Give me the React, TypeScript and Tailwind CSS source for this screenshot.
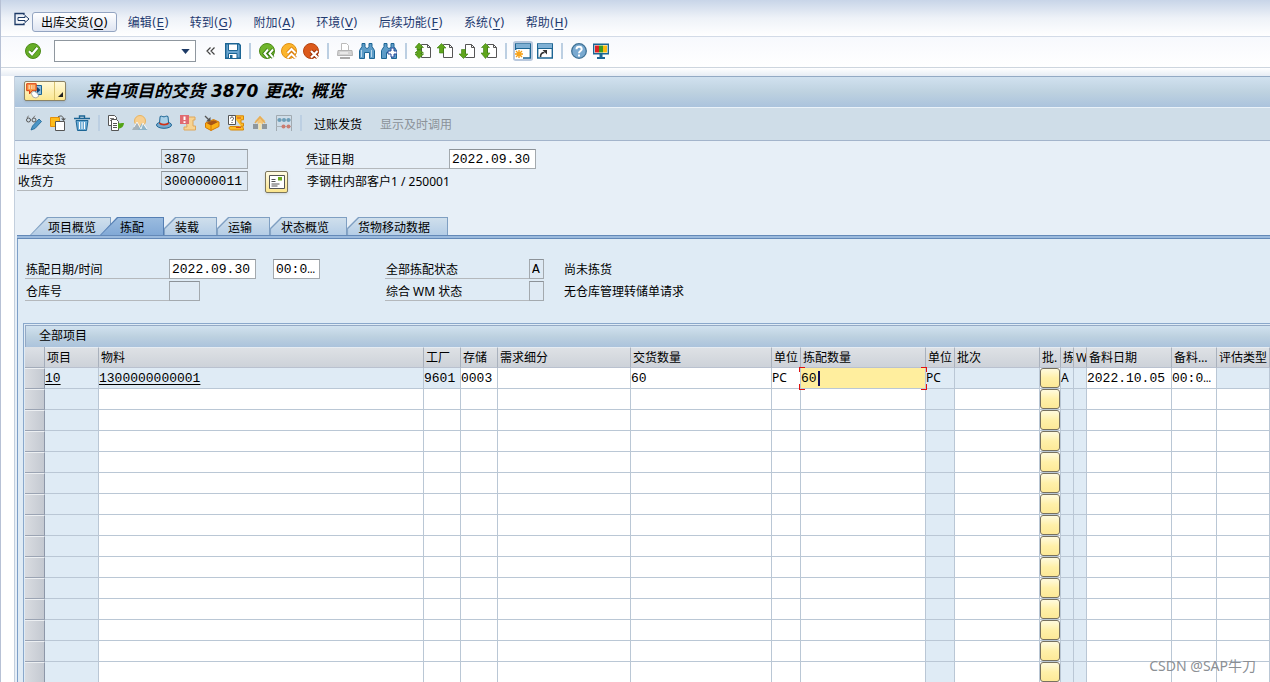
import type { ReactNode } from "react"
import clsx from "clsx"

type IconProps = { children: ReactNode }

function Icon({ children }: IconProps) {
  return (
    <svg viewBox="0 0 16 16" className="h-4 w-4 shrink-0" fill="none" aria-hidden="true">
      {children}
    </svg>
  )
}

const blue = "#1c6594"
const green = "#5fa51c"

function PageOutline() {
  return <path d="M6.5 1.5h6l3 3v10h-9z M12.5 1.5v3h3" fill="#fff" stroke="#555" />
}

function WindowFrame() {
  return (
    <>
      <path d="M.7 1h14.6v14H.7z" fill="#fff" stroke={blue} strokeWidth="1.4" />
      <path d="M1 1h14v4H1z" fill="#7fb0d4" />
      <path d="M0 5.5h16" stroke={blue} />
    </>
  )
}

function Binoculars() {
  return (
    <path
      d="M3 .5h3v3l1.5 2h1L10 3.5v-3h3v3l2.5 4v8h-5v-6h-5v6h-5v-8L3 3.500z"
      fill="#5d9cc8"
      stroke={blue}
    />
  )
}

type Tool = { label: string; icon: ReactNode; active?: boolean } | "sep"

const systemTools: Tool[] = [
  {
    label: "保存",
    icon: (
      <>
        <path d="M.7.7h13l1.6 1.6v13H.7z" fill="#6aa5d0" stroke={blue} strokeWidth="1.4" />
        <path d="M3.5 1h9v6.5h-9z" fill="#fff" stroke={blue} />
        <path d="M3.5 10.5h8.5v5H3.5z" fill="#fff" stroke={blue} />
        <path d="M5 12h2.5v3H5z" fill={blue} />
      </>
    ),
  },
  "sep",
  {
    label: "返回",
    icon: (
      <>
        <circle cx="8" cy="8" r="7.5" fill="#6fb52c" stroke="#4c8b18" />
        <path d="M9 6.5 5.5 10.5 9 14.5M14 6.5l-3.5 4L14 14.5" stroke="#35780e" strokeWidth="3.6" />
        <path d="M9 6.5 5.5 10.5 9 14.5M14 6.5l-3.5 4L14 14.5" stroke="#fff" strokeWidth="2" />
      </>
    ),
  },
  {
    label: "退出",
    icon: (
      <>
        <circle cx="8" cy="8" r="7.5" fill="#fbb52d" stroke="#e09012" />
        <path d="m6.5 10 4-4 4 4m-8 5 4-4 4 4" stroke="#d87908" strokeWidth="3.6" />
        <path d="m6.5 10 4-4 4 4m-8 5 4-4 4 4" stroke="#fff" strokeWidth="2" />
      </>
    ),
  },
  {
    label: "取消",
    icon: (
      <>
        <circle cx="8" cy="8" r="7.5" fill="#dc5a1b" stroke="#b54410" />
        <path d="m8 8 6.5 6.5M14.5 8 8 14.5" stroke="#9c2f08" strokeWidth="4" />
        <path d="m8 8 6.5 6.5M14.5 8 8 14.5" stroke="#fff" strokeWidth="2.2" />
      </>
    ),
  },
  "sep",
  {
    label: "打印",
    icon: (
      <>
        <path d="M4.500 7V.5h5l2 2V7" fill="#fff" stroke="#bbb" />
        <path d="M1 7.500h14l.5 5H.5z" fill="#d3d3d3" stroke="#b3b3b3" />
        <path d="M3 15h10" stroke="#aaa" strokeWidth="2" />
        <path d="M3 10h8" stroke="#fff" />
      </>
    ),
  },
  {
    label: "查找",
    icon: (
      <>
        <Binoculars />
        <path d="M2.500 7v7M12.500 7v7" stroke="#b9d8ec" />
      </>
    ),
  },
  {
    label: "继续查找",
    icon: (
      <>
        <Binoculars />
        <path d="M10 5h3v3h3v3h-3v3h-3v-3H7V8h3z" fill="#fff" stroke="#27499b" />
      </>
    ),
  },
  "sep",
  {
    label: "首页",
    icon: (
      <>
        <PageOutline />
        <path d="M4 0 8.500 4.500H6v2.500H2V4.500H0zM4 6l4.500 4H6v1h2.500L4 15.500 0 11h2v-1H0z" fill={green} stroke="#3b7d0d" strokeWidth=".6" />
      </>
    ),
  },
  {
    label: "上一页",
    icon: (
      <>
        <PageOutline />
        <path d="M4.500.5 9 5H6.500v5h-4V5H0z" fill={green} stroke="#3b7d0d" strokeWidth=".6" />
      </>
    ),
  },
  {
    label: "下一页",
    icon: (
      <>
        <PageOutline />
        <path d="M4.500 15.500 9 11H6.500V6.500h-4V11H0z" fill={green} stroke="#3b7d0d" strokeWidth=".6" />
      </>
    ),
  },
  {
    label: "末页",
    icon: (
      <>
        <PageOutline />
        <path d="M4.500.5 8.500 4.500h-2V10h2.500l-4.500 5.500L0 10h2.500V4.500H.5z" fill={green} stroke="#3b7d0d" strokeWidth=".6" />
      </>
    ),
  },
  "sep",
  {
    label: "创建新会话",
    active: true,
    icon: (
      <>
        <WindowFrame />
        <path d="M0 7h8v9H0z" fill="#fff" />
        <path d="M4 7v8M0 11h8M1 8l6 6M7 8l-6 6" stroke="#f59c12" strokeWidth="1.300" />
        <circle cx="4" cy="11" r="2.300" fill="#f9a51a" />
      </>
    ),
  },
  {
    label: "生成快捷方式",
    icon: (
      <>
        <WindowFrame />
        <path d="M3.500 14c0-3 1-4.500 4-4.500" stroke="#333" strokeWidth="1.600" />
        <path d="M5.500 7H10v4.500z" fill="#333" />
      </>
    ),
  },
  "sep",
  {
    label: "帮助",
    icon: (
      <>
        <circle cx="8" cy="8" r="7.300" fill="#79a9d0" stroke="#3f7296" strokeWidth="1.300" />
        <path d="M5.500 6.200c0-3.200 5.200-3.200 5.200 0C10.700 8 8 8 8 10.200" stroke="#fff" strokeWidth="2" />
        <path d="M7 11.500h2v2H7z" fill="#fff" />
      </>
    ),
  },
  {
    label: "定制本地布局",
    icon: (
      <>
        <path d="M.7 1.200h14.600v9.600H.7z" fill="#fff" stroke={blue} strokeWidth="1.400" />
        <path d="M2 2.500h4v7H2z" fill="#d22" />
        <path d="M6 2.500h4v7H6z" fill="#3b9b22" />
        <path d="M10 2.500h4v7h-4z" fill="#fbb80f" />
        <path d="M6.500 11h3v3h2.500v2H4v-2h2.500z" fill={blue} />
      </>
    ),
  },
]

const appTools: Tool[] = [
  {
    label: "显示/更改",
    icon: (
      <>
        <circle cx="2.500" cy="5" r="2" stroke="#555" />
        <circle cx="8" cy="5" r="2" stroke="#555" />
        <path d="M1 3 2.500.7M7 3l2-2.300" stroke="#777" />
        <path d="m5 15 1.500-4L13 4l2.500 2.500L9 13.500z" fill="#4b95c6" stroke={blue} strokeWidth=".8" />
      </>
    ),
  },
  {
    label: "其他交货",
    icon: (
      <>
        <path d="M.5 2.500h9v9h-9z" fill="#fdbc1c" stroke="#e79008" />
        <path d="M5.500 6.500h9v9h-9z" fill="#fff" stroke="#555" />
        <path d="M8 2c3-2 5-1 5.500 2" stroke="#555" />
        <path d="M11 3.500h5L13.500 6z" fill="#555" />
      </>
    ),
  },
  {
    label: "删除",
    icon: (
      <>
        <path d="M0 3.500h16M5.500 3V1h5v2" stroke={blue} strokeWidth="1.400" />
        <path d="M2 5.500h12l-1.500 10h-9z" fill="#6aa9d3" stroke={blue} />
        <path d="M5.500 7v7M8 7v7M10.500 7v7" stroke="#fff" />
      </>
    ),
  },
  "sep",
  {
    label: "发布",
    icon: (
      <>
        <path d="M.5.5h6l2 2v8h-8z" fill="#fff" stroke="#555" />
        <path d="M2 3.500h4M2 5.500h5" stroke="#777" />
        <path d="M3.500 4.500h5l2 2v9h-7z" fill="#fff" stroke="#555" />
        <path d="M5 8.500h4M5 10.500h4M5 12.500h4" stroke="#555" />
        <path d="M10 8c2 1 3-.5 6 0-.5 4-2.500 5.500-6 5.500z" fill="#52a316" />
      </>
    ),
  },
  {
    label: "批次确定",
    icon: (
      <>
        <circle cx="8" cy="6" r="5.500" fill="#f7cf91" stroke="#e9b45f" />
        <path d="m0 15 5-8 4 8z" fill="#a7b3ba" />
        <path d="m6 15 4-7 5.500 7z" fill="#8eb5ca" />
        <path d="m2 12 3-5 4 7 2-6 4 6" stroke="#fff" strokeWidth=".8" />
      </>
    ),
  },
  {
    label: "抬头详细信息",
    icon: (
      <>
        <ellipse cx="8" cy="10" rx="7.500" ry="3.300" fill="#77abd0" stroke={blue} />
        <path d="m3.500 8 .6-6.500c2-1 2 .5 4 .3 1.800-.2 2-1.300 3.900-.3l.6 6.500c-2 2-7 2-9.100 0z" fill="#a9d0e8" stroke={blue} />
        <path d="M3.500 8.200c2 2 7 2 9 0" stroke="#d33015" strokeWidth="1.800" />
      </>
    ),
  },
  {
    label: "不完整日志",
    icon: (
      <>
        <path d="M6 2h9v3h-2v6h2.500v4H4v-3h3z" fill="#f7d391" stroke="#dfa75a" />
        <path d="M0 0h9v9H0z" fill="#e06a70" />
        <path d="M3.500 1.500h2V5h-2zM3.500 6.200h2V8h-2z" fill="#fff" />
      </>
    ),
  },
  {
    label: "包装",
    icon: (
      <>
        <path d="m1.500 8 8-3.500 5.500 2.500v4.500L7 15.500l-5.500-3z" fill="#fbb118" stroke="#d57a05" />
        <path d="m2.500 8 7-2.700L14 7l-7 3.500z" fill="#a85516" />
        <path d="M7 10.500v5" stroke="#d57a05" />
        <path d="m1 1 4 4" stroke="#555" strokeWidth="1.200" />
        <path d="M6.500 2v4.500H2z" fill="#555" />
      </>
    ),
  },
  {
    label: "凭证流",
    icon: (
      <>
        <path d="M5 .8h10.500v4H13v3.400h2.500v3H13M2 11.500h9.500c3 0 4 0 4 3.500H3.500C1 15 .5 12.500 2 11.500z" fill="#fcbd28" stroke="#d98706" />
        <path d="M.5.500h7v9h-7z" fill="#fff" stroke="#555" />
        <path d="M2.500 3.500c0-2 3-2 3 0C5.500 5 4 4.500 4 6M4 7v1" stroke="#444" />
        <path d="M8 12.500h5M9 3h4" stroke="#d94a18" />
      </>
    ),
  },
  {
    label: "服务",
    icon: (
      <>
        <path d="m8 1 5.500 5H11v3H5.500V6H3z" fill="#f2c57a" />
        <path d="m3 8 5-6 5 6" stroke="#e5ae58" strokeWidth="1.600" />
        <path d="M1 9h5v5H1zM10 9h5v5h-5z" fill="#8e979d" />
        <path d="M6.500 8h3v7h-3z" fill="#f4e3ae" />
      </>
    ),
  },
  {
    label: "库存概览",
    icon: (
      <>
        <path d="M.5 16V.5h15V16" stroke="#a1aab1" />
        <path d="M0 5h16M0 11.500h16" stroke="#a9b2b9" />
        <g fill="#6d9fb9">
          <circle cx="3.500" cy="5" r="2" />
          <circle cx="8" cy="5" r="2" />
          <circle cx="12.500" cy="5" r="2" />
        </g>
        <g fill="#cb7c70">
          <circle cx="7.500" cy="11.500" r="2" />
          <circle cx="12.500" cy="11.500" r="2" />
        </g>
      </>
    ),
  },
  "sep",
]

const menus = [
  ["出库交货", "O"],
  ["编辑", "E"],
  ["转到", "G"],
  ["附加", "A"],
  ["环境", "V"],
  ["后续功能", "F"],
  ["系统", "Y"],
  ["帮助", "H"],
]

function MenuBar() {
  return (
    <nav className="flex h-[37px] items-center border-b border-[#d3dbe7] bg-gradient-to-b from-[#c8d5e8] via-[#eef2f8] to-white pt-[7px] pl-[13px]">
      <svg viewBox="0 0 16 14" className="mb-[6px] h-[14px] w-4" fill="none" aria-hidden="true">
        <path d="M10 3V1.500H1v11h9V11" stroke="#1d3a66" strokeWidth="1.300" />
        <path d="M4 5.500h7V3.500l4 3.500-4 3.500v-2H4z" fill="#fff" stroke="#1d3a66" />
      </svg>
      <div className="ml-[2px] flex gap-px">
        {menus.map(([label, key], i) => (
          <button
            key={key}
            type="button"
            className={clsx(
              "h-5 rounded-[3px] border text-xs leading-5 whitespace-nowrap",
              i === 0
                ? "border-[#93a4c1] bg-gradient-to-b from-white to-[#dfe5f2] px-2 text-black"
                : "border-transparent px-[9px] text-[#1f3a70]"
            )}
          >
            {label}
            <span className="font-['DejaVu_Sans']">
              (<u className="underline-offset-2">{key}</u>)
            </span>
          </button>
        ))}
      </div>
    </nav>
  )
}

function ToolButton({ tool }: { tool: Tool }) {
  if (tool === "sep") {
    return (
      <span className="flex h-4 w-[6px] justify-center">
        <span className="w-[2px] bg-[#bccfe2]" />
      </span>
    )
  }
  return (
    <button
      type="button"
      title={tool.label}
      aria-label={tool.label}
      className={clsx("h-4 w-4 shrink-0", tool.active && "rounded-[1px] bg-[#e4ebf5] ring-2 ring-[#b9c8dd]")}
    >
      <Icon>{tool.icon}</Icon>
    </button>
  )
}

function SystemToolbar() {
  return (
    <div className="flex h-[31px] items-center border-b border-[#cdd5de] bg-gradient-to-b from-[#f7f9fd] to-white pb-[2px] pl-6">
      <button type="button" aria-label="回车">
        <Icon>
          <circle cx="8" cy="8" r="7.500" fill="#66ad27" stroke="#4c8b18" />
          <path d="m4 8.200 3 3 5.500-6.500" stroke="#35780e" strokeWidth="3.600" />
          <path d="m4 8.200 3 3 5.500-6.500" stroke="#fff" strokeWidth="2.300" />
        </Icon>
      </button>
      <div className="ml-[13px] flex h-[22px] w-[142px] items-center border border-[#8f979f] bg-white">
        <input aria-label="命令" className="min-w-0 flex-1 px-1 text-xs outline-none" />
        <button type="button" aria-label="命令历史" className="flex w-5 justify-center">
          <svg viewBox="0 0 10 6" className="h-[5px] w-[9px]" aria-hidden="true">
            <path d="M0 0h10L5 6z" fill="#1d3a66" />
          </svg>
        </button>
      </div>
      <button type="button" aria-label="隐藏命令栏" className="mr-[10px] ml-[10px]">
        <svg viewBox="0 0 9 8" className="h-2 w-[9px]" fill="none" aria-hidden="true">
          <path d="M4.500.5 1 4l3.500 3.500M8.500.5 5 4l3.500 3.500" stroke="#444" strokeWidth="1.200" />
        </svg>
      </button>
      <div className="flex items-center gap-[6px]">
        {systemTools.map((tool, i) => (
          <ToolButton key={i} tool={tool} />
        ))}
      </div>
    </div>
  )
}

function TitleBar() {
  return (
    <div className="flex h-[32px] items-center border-t border-b border-t-[#93aac4] border-b-[#eaf2f9] bg-gradient-to-b from-[#d1e1ef] via-[#bed2e0] to-[#abc3dd] pb-[2px] pl-[9px]">
      <button
        type="button"
        aria-label="对象服务"
        className="mr-[20px] flex h-5 w-[42px] items-center rounded-[2px] border border-[#8c8365] bg-gradient-to-b from-[#fff9d8] to-[#fce790] pl-[1px] shadow-sm"
      >
        <svg viewBox="0 0 18 16" className="h-4 w-[18px]" fill="none" aria-hidden="true">
          <path d="M9.500 2.500h6v9h-6z" fill="#8bbce0" stroke={blue} />
          <path d="m11 4 3.500 3-3.500 3z" fill="#10426e" />
          <path d="M.700.700h9.500v7H6L3.500 11V7.700H.700z" fill="#f99b45" stroke="#da3d12" />
          <path d="M2.500 3h6M2.500 5h6" stroke="#fff" strokeDasharray="1.500 1" />
          <path d="m5 10 3-2 3 2 2 3-3 2-3-1z" fill="#fff" stroke="#999" strokeWidth=".8" />
        </svg>
        <span className="ml-auto flex h-full w-[11px] items-end justify-center border-l border-[#d8c26e] pb-[3px]">
          <svg viewBox="0 0 5 5" className="h-[5px] w-[5px]" aria-hidden="true">
            <path d="M5 0v5H0z" fill="#222" />
          </svg>
        </span>
      </button>
      <h1 className="font-['DejaVu_Sans','Noto_Sans_CJK_SC',sans-serif] text-[17px] leading-[26px] font-bold whitespace-nowrap text-black italic">
        来自项目的交货 3870 更改: 概览
      </h1>
    </div>
  )
}

function AppToolbar() {
  return (
    <div className="flex h-[33px] items-center gap-2 border-b border-[#a3b4cb] bg-[#cfdde8] pb-[2px] pl-[11px] [&>span]:w-[2px]">
      {appTools.map((tool, i) => (
        <ToolButton key={i} tool={tool} />
      ))}
      <button type="button" className="px-1 pt-[3px] text-xs">
        过账发货
      </button>
      <button type="button" disabled className="px-[6px] pt-[3px] text-xs text-[#8b9299]">
        显示及时调用
      </button>
    </div>
  )
}

type FieldProps = {
  id: string
  label: string
  value: string
  width: string
  readOnly?: boolean
}

function Field({ id, label, value, width, readOnly = false }: FieldProps) {
  return (
    <div className="flex h-5">
      <label htmlFor={id} className="w-36 border-b border-[#b4b8bc] pl-px text-xs leading-[22px] whitespace-nowrap">
        {label}
      </label>
      <ValueBox id={id} value={value} width={width} readOnly={readOnly} />
    </div>
  )
}

type ValueBoxProps = {
  id: string
  value: string
  width: string
  readOnly?: boolean
  label?: string
}

function ValueBox({ id, value, width, readOnly, label }: ValueBoxProps) {
  return (
    <input
      id={id}
      aria-label={label}
      defaultValue={value}
      readOnly={readOnly}
      className={clsx(
        "h-5 border border-[#a3a9ae] border-t-[#8c9298] pl-[2px] font-['Liberation_Mono',monospace] text-[13px] leading-[18px] outline-none",
        width,
        readOnly ? "bg-[#dfeaf4]" : "bg-white"
      )}
    />
  )
}

function HeaderFields() {
  return (
    <section className="flex pt-2 pl-[2px] text-black">
      <div className="flex flex-col gap-[2px]">
        <Field id="delivery" label="出库交货" value="3870" width="w-[87px]" readOnly />
        <Field id="shipto" label="收货方" value="3000000011" width="w-[87px]" readOnly />
      </div>
      <button
        type="button"
        aria-label="地址"
        className="ml-[17px] flex h-[22px] w-[23px] items-center justify-center self-end rounded-[2px] border border-[#7d765c] bg-gradient-to-b from-[#fffbe3] to-[#fbe58c] shadow-sm"
      >
        <svg viewBox="0 0 16 14" className="h-[14px] w-4" fill="none" aria-hidden="true">
          <path d="M.5.500h15v13H.5z" fill="#fff" stroke="#555" />
          <path d="M9 2h4v3.500H9z" fill="#6cab1d" />
          <path d="M2.500 4.500h4M2.500 6.500h4M2.500 9h8M2.500 11h6" stroke="#555" />
        </svg>
      </button>
      <div className="ml-[17px] flex flex-col gap-[2px]">
        <Field id="docdate" label="凭证日期" value="2022.09.30" width="w-[87px]" />
        <p className="pl-[2px] text-xs leading-[22px] whitespace-nowrap">李钢柱内部客户1 / 250001</p>
      </div>
    </section>
  )
}

const slantWide = "[clip-path:polygon(17px_0,100%_0,100%_100%,0_100%)]"
const slantShort = "[clip-path:polygon(11px_0,100%_0,100%_100%,0_100%,0_11px)]"

const tabs = [
  { label: "项目概览", shape: slantWide, pad: "pl-[17px] pr-[14px]" },
  { label: "拣配", shape: slantWide, pad: "px-[19px]", active: true },
  { label: "装载", shape: slantShort, pad: "pl-[10px] pr-[17px]" },
  { label: "运输", shape: slantShort, pad: "pl-[10px] pr-[17px]" },
  { label: "状态概览", shape: slantShort, pad: "pl-[10px] pr-[17px]" },
  { label: "货物移动数据", shape: slantShort, pad: "pl-[10px] pr-[17px]" },
]

function TabStrip() {
  return (
    <div role="tablist" className="flex pt-6 pl-[15px]">
      {tabs.map((tab) => (
        <button
          key={tab.label}
          type="button"
          role="tab"
          aria-selected={Boolean(tab.active)}
          className={clsx(
            "h-[18px] px-px pt-px",
            tab.shape,
            tab.active ? "z-10 -ml-[11px] bg-[#557fb4]" : "bg-[#7f9fc2]"
          )}
        >
          <span
            className={clsx(
              "block h-[17px] text-xs leading-5 whitespace-nowrap",
              tab.shape,
              tab.pad,
              tab.active
                ? "bg-gradient-to-b from-[#9abbdf] to-[#82a9d6]"
                : "bg-gradient-to-b from-[#cfdfec] to-[#b5cde6]"
            )}
          >
            {tab.label}
          </span>
        </button>
      ))}
    </div>
  )
}

function PickingFields() {
  return (
    <div className="flex pt-5 pl-[7px] text-black">
      <div className="flex flex-col gap-[2px]">
        <div className="flex gap-[17px]">
          <Field id="pickdate" label="拣配日期/时间" value="2022.09.30" width="w-[87px]" />
          <ValueBox id="picktime" label="拣配时间" value="00:0…" width="w-[47px]" />
        </div>
        <Field id="warehouse" label="仓库号" value="" width="w-[31px]" readOnly />
      </div>
      <div className="ml-[65px] flex flex-col gap-[2px]">
        <Field id="pickstatus" label="全部拣配状态" value="A" width="w-[15px]" readOnly />
        <Field id="wmstatus" label="综合 WM 状态" value="" width="w-[15px]" readOnly />
      </div>
      <div className="ml-5 flex flex-col text-xs leading-[22px] whitespace-nowrap">
        <p>尚未拣货</p>
        <p>无仓库管理转储单请求</p>
      </div>
    </div>
  )
}

type Column = {
  title: string
  width: string
  value?: string
  locked?: boolean // display only in every row
  filled?: boolean // display only in rows that hold an item
  kind?: "link" | "button" | "active" | "text"
}

const columns: Column[] = [
  { title: "项目", width: "w-[54px]", value: "10", locked: true, kind: "link" },
  { title: "物料", width: "w-[325px]", value: "1300000000001", filled: true, kind: "link" },
  { title: "工厂", width: "w-[37px]", value: "9601", filled: true },
  { title: "存储", width: "w-[37px]", value: "0003" },
  { title: "需求细分", width: "w-[133px]" },
  { title: "交货数量", width: "w-[141px]", value: "60" },
  { title: "单位", width: "w-[29px]", value: "PC", kind: "text" },
  { title: "拣配数量", width: "w-[125px]", value: "60", kind: "active" },
  { title: "单位", width: "w-[29px]", value: "PC", locked: true, kind: "text" },
  { title: "批次", width: "w-[85px]", filled: true },
  { title: "批.", width: "w-[21px]", kind: "button" },
  { title: "拣", width: "w-[13px]", value: "A", locked: true, kind: "text" },
  { title: "W", width: "w-[13px]", locked: true },
  { title: "备料日期", width: "w-[85px]", value: "2022.10.05" },
  { title: "备料…", width: "w-[45px]", value: "00:0…" },
  { title: "评估类型", width: "w-auto", filled: true },
]

const rows = Array.from({ length: 15 }, (_, i) => i)

function ActiveCell() {
  return (
    <div className="relative flex h-5 items-center bg-[#ffee9e]">
      <input aria-label="拣配数量" defaultValue="60" className="h-5 w-[17px] pt-px outline-none" />
      <span className="h-[15px] w-[2px] bg-[#10105c]" />
      <span className="absolute -top-px -left-[2px] h-[5px] w-[6px] border-t border-l border-[#e01010]" />
      <span className="absolute -top-px -right-[2px] h-[5px] w-[6px] border-t border-r border-[#e01010]" />
      <span className="absolute -bottom-[2px] -left-[2px] h-[6px] w-[6px] border-b border-l border-[#e01010]" />
      <span className="absolute -right-[2px] -bottom-[2px] h-[6px] w-[6px] border-r border-b border-[#e01010]" />
    </div>
  )
}

function CellContent({ column, first }: { column: Column; first: boolean }) {
  if (column.kind === "button") {
    return (
      <button
        type="button"
        aria-label="批次拆分"
        className="block h-5 w-5 rounded-[3px] border border-[#77715f] bg-gradient-to-b from-[#fffadd] via-[#fff0a9] to-[#fde998]"
      />
    )
  }
  if (!first || !column.value) return null
  if (column.kind === "active") return <ActiveCell />
  return (
    <div className="h-5 pt-[2px] leading-[18px]">
      {column.kind === "link" ? (
        <a href="#item" className="underline underline-offset-2">
          {column.value}
        </a>
      ) : column.kind === "text" ? (
        <span className="font-['Noto_Sans',sans-serif] text-xs">{column.value}</span>
      ) : (
        column.value
      )}
    </div>
  )
}

function ItemTable() {
  return (
    <section className="mt-[20px] ml-[5px] border-t border-l border-[#8aa8cb] pt-px pl-px text-black">
      <h2 className="h-[22px] border-t border-l border-[#94aac6] bg-gradient-to-b from-[#d1e2ef] via-[#bdd1e0] to-[#abc3dc] pl-[13px] text-xs leading-5">
        全部项目
      </h2>
      <table className="w-full table-fixed border-separate border-spacing-0 bg-white">
        <colgroup>
          <col className="w-5" />
          {columns.map((column, i) => (
            <col key={i} className={column.width} />
          ))}
        </colgroup>
        <thead>
          <tr>
            <th aria-label="选择" className="h-[21px] border-r border-b border-[#a3acba] bg-gradient-to-b from-[#dde1e6] to-[#c9ced6]" />
            {columns.map((column, i) => (
              <th
                key={i}
                className="h-[21px] overflow-hidden border-t border-r border-b border-t-[#e6ecf2] border-r-[#a9b1bd] border-b-[#b9c1cf] bg-gradient-to-b from-[#dee1e5] to-[#cdd2d9] p-0 pl-[2px] text-left text-xs leading-[19px] font-normal whitespace-nowrap"
              >
                {column.title}
              </th>
            ))}
          </tr>
        </thead>
        <tbody>
          {rows.map((row) => (
            <tr key={row}>
              <td className="h-[21px] border-t border-r border-b border-t-[#eceff2] border-r-[#8d97a8] border-b-[#9ba4b3] bg-gradient-to-r from-[#d9dce1] to-[#c4c9d1] p-0" />
              {columns.map((column, i) => (
                <td
                  key={i}
                  className={clsx(
                    "h-[21px] border-r border-b border-[#bac7d5] p-0 font-['Liberation_Mono',monospace] text-[13px] leading-5 whitespace-nowrap",
                    column.locked || (row === 0 && column.filled) ? "bg-[#dfebf5]" : "bg-white"
                  )}
                >
                  <CellContent column={column} first={row === 0} />
                </td>
              ))}
            </tr>
          ))}
        </tbody>
      </table>
    </section>
  )
}

export default function App() {
  return (
    <div className="relative flex h-screen flex-col overflow-hidden border-l border-[#b7c1d5] bg-white font-['Noto_Sans','Noto_Sans_CJK_SC',sans-serif] [&>*]:shrink-0">
      <MenuBar />
      <SystemToolbar />
      <div className="h-2 bg-gradient-to-b from-white to-[#e6ecf4]" />
      <main className="ml-[13px] border-l border-[#c3cfdd] bg-[#e7eff7]">
        <TitleBar />
        <AppToolbar />
        <HeaderFields />
        <TabStrip />
        <div className="ml-[2px] h-1 border-y border-[#6489b8] bg-[#9bbadd]" />
        <div className="ml-[2px] border-l border-[#7d9fc8] bg-[#dfebf5]">
          <PickingFields />
          <ItemTable />
        </div>
      </main>
      <p className="absolute right-[14px] bottom-[6px] text-sm text-[#8b8f94]">CSDN @SAP牛刀</p>
    </div>
  )
}
